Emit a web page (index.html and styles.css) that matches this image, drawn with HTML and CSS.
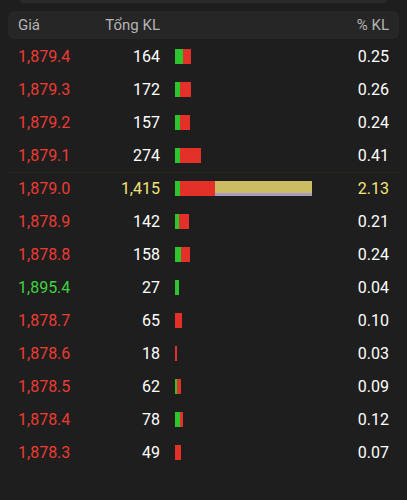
FILE: index.html
```html
<!DOCTYPE html>
<html lang="vi">
<head>
    <meta charset="UTF-8">
    <title>Khớp lệnh theo giá</title>
    <meta name="viewport" content="width=device-width, initial-scale=1.0">
    <link rel="stylesheet" href="styles.css">
</head>
<body>
    <div class="top-stub"></div>

    <div class="table">
        <!-- Header -->
        <div class="header">
            <span class="col-price">Giá</span>
            <span class="col-vol">Tổng KL</span>
            <span class="col-bar"></span>
            <span class="col-pct">% KL</span>
        </div>

        <div class="rows">
            <div class="row">
                <span class="col-price down">1,879.4</span>
                <span class="col-vol">164</span>
                <span class="col-bar"><i class="buy" style="width:8px"></i><i class="sell" style="width:8px"></i></span>
                <span class="col-pct">0.25</span>
            </div>
            <div class="row">
                <span class="col-price down">1,879.3</span>
                <span class="col-vol">172</span>
                <span class="col-bar"><i class="buy" style="width:5px"></i><i class="sell" style="width:11px"></i></span>
                <span class="col-pct">0.26</span>
            </div>
            <div class="row">
                <span class="col-price down">1,879.2</span>
                <span class="col-vol">157</span>
                <span class="col-bar"><i class="buy" style="width:5px"></i><i class="sell" style="width:10px"></i></span>
                <span class="col-pct">0.24</span>
            </div>
            <div class="row">
                <span class="col-price down">1,879.1</span>
                <span class="col-vol">274</span>
                <span class="col-bar"><i class="buy" style="width:5px"></i><i class="sell" style="width:21px"></i></span>
                <span class="col-pct">0.41</span>
            </div>
            <div class="row current">
                <span class="col-price down">1,879.0</span>
                <span class="col-vol">1,415</span>
                <span class="col-bar"><i class="buy" style="width:5px"></i><i class="sell" style="width:35px"></i><i class="ato" style="width:97px"></i></span>
                <span class="col-pct">2.13</span>
            </div>
            <div class="row">
                <span class="col-price down">1,878.9</span>
                <span class="col-vol">142</span>
                <span class="col-bar"><i class="buy" style="width:4px"></i><i class="sell" style="width:10px"></i></span>
                <span class="col-pct">0.21</span>
            </div>
            <div class="row">
                <span class="col-price down">1,878.8</span>
                <span class="col-vol">158</span>
                <span class="col-bar"><i class="buy" style="width:6px"></i><i class="sell" style="width:9px"></i></span>
                <span class="col-pct">0.24</span>
            </div>
            <div class="row">
                <span class="col-price up">1,895.4</span>
                <span class="col-vol">27</span>
                <span class="col-bar"><i class="buy" style="width:4px"></i></span>
                <span class="col-pct">0.04</span>
            </div>
            <div class="row">
                <span class="col-price down">1,878.7</span>
                <span class="col-vol">65</span>
                <span class="col-bar"><i class="sell" style="width:7px"></i></span>
                <span class="col-pct">0.10</span>
            </div>
            <div class="row">
                <span class="col-price down">1,878.6</span>
                <span class="col-vol">18</span>
                <span class="col-bar"><i class="sell" style="width:2px"></i></span>
                <span class="col-pct">0.03</span>
            </div>
            <div class="row">
                <span class="col-price down">1,878.5</span>
                <span class="col-vol">62</span>
                <span class="col-bar"><i class="buy" style="width:2px"></i><i class="sell" style="width:4px"></i></span>
                <span class="col-pct">0.09</span>
            </div>
            <div class="row">
                <span class="col-price down">1,878.4</span>
                <span class="col-vol">78</span>
                <span class="col-bar"><i class="buy" style="width:5px"></i><i class="sell" style="width:3px"></i></span>
                <span class="col-pct">0.12</span>
            </div>
            <div class="row">
                <span class="col-price down">1,878.3</span>
                <span class="col-vol">49</span>
                <span class="col-bar"><i class="sell" style="width:6px"></i></span>
                <span class="col-pct">0.07</span>
            </div>
        </div>
    </div>
</body>
</html>
```

FILE: styles.css
```css
body {
    font-family: Roboto, "Noto Sans", Arial, sans-serif;
    margin: 0;
    background-color: #1e1e1e;
    color: #ffffff;
    height: 500px;
    overflow: hidden;
}
.top-stub {
    height: 3px;
    margin: 0 20px;
    background-color: #2a2a2a;
    border-radius: 0 0 6px 6px;
}
.table {
    padding: 8px 8px 0;
}
.header,
.row {
    display: flex;
    align-items: center;
    padding: 0 10px;
}
.header {
    height: 28px;
    background-color: #262626;
    border-radius: 6px;
    color: #b4b4b4;
    font-size: 15px;
}
.rows {
    padding-top: 1px;
}
.row {
    height: 33px;
    font-size: 16px;
}
/* highlighted row for the matched price */
.row.current {
    box-shadow: inset 0 1px 0 #262516;
}
.row.current .col-vol,
.row.current .col-pct {
    color: #f2e47a;
}
.col-price {
    width: 82px;
}
.col-vol {
    width: 60px;
    text-align: right;
}
.col-bar {
    flex: 1;
    display: flex;
    height: 15px;
    margin-left: 15px;
}
.header .col-bar {
    height: auto;
}
.col-bar i {
    display: block;
    height: 100%;
}
.col-bar .buy {
    background-color: #2cc52e;
}
.col-bar .sell {
    background-color: #e3312a;
}
.col-bar .ato {
    background-color: #cdbd62;
    box-shadow: inset 0 -3px 0 #a99bc4;
}
.col-pct {
    width: 60px;
    text-align: right;
}
.down {
    color: #ec3b33;
}
.up {
    color: #3fd23f;
}
```
